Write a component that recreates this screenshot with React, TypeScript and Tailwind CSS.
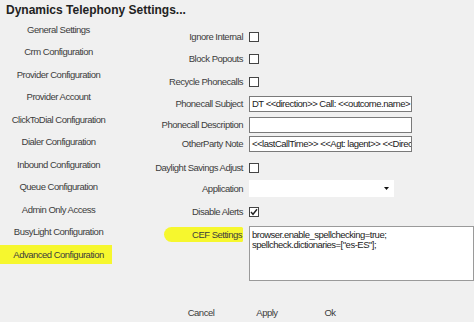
import React from "react";

const navItems = [
  "General Settings",
  "Crm Configuration",
  "Provider Configuration",
  "Provider Account",
  "ClickToDial Configuration",
  "Dialer Configuration",
  "Inbound Configuration",
  "Queue Configuration",
  "Admin Only Access",
  "BusyLight Configuration",
];

const font = { fontFamily: '"Liberation Sans", Arial, sans-serif' };

function Box({ checked = false }: { checked?: boolean }) {
  return (
    <div className="w-[10px] h-[10px] border border-[#444] bg-white flex items-center justify-center">
      {checked && (
        <svg width="8" height="8" viewBox="0 0 8 8">
          <path d="M1 4 L3 6.3 L7 1.2" stroke="#222" strokeWidth="1.4" fill="none" />
        </svg>
      )}
    </div>
  );
}

function Row({ label, h, mt, children }: { label: string; h: number; mt: number; children: React.ReactNode }) {
  return (
    <div className="flex items-center" style={{ height: h, marginTop: mt }}>
      <div className="w-[126px] text-right text-[#3c3c3c] whitespace-nowrap">{label}</div>
      <div className="ml-[6px] flex items-center">{children}</div>
    </div>
  );
}

export default function App() {
  return (
    <div
      className="w-[474px] h-[322px] bg-[#f0f0f0] overflow-hidden text-[9.5px] tracking-[-0.5px] leading-none"
      style={font}
    >
      <div className="h-[18px] pl-[6px] pt-[4px] text-[12px] tracking-normal font-bold text-[#222] whitespace-nowrap">
        Dynamics Telephony Settings...
      </div>
      <div className="flex">
        <div className="w-[117px] shrink-0 flex flex-col">
          {navItems.map((n) => (
            <div key={n} className="h-[22.5px] flex items-center justify-center text-[#3c3c3c] whitespace-nowrap">
              {n}
            </div>
          ))}
          <div className="h-[22.5px] flex items-center">
            <div className="w-[112px] h-[19px] bg-[#f6f72e] flex items-center justify-center pl-[5px] text-[#3c3c3c] whitespace-nowrap">
              Advanced Configuration
            </div>
          </div>
        </div>
        <div className="flex flex-col">
          <Row label="Ignore Internal" h={23} mt={7}>
            <Box />
          </Row>
          <Row label="Block Popouts" h={22} mt={0}>
            <Box />
          </Row>
          <Row label="Recycle Phonecalls" h={23} mt={0}>
            <Box />
          </Row>
          <Row label="Phonecall Subject" h={16} mt={3}>
            <div className="w-[163px] h-[16px] border border-[#7a7a7a] bg-white px-[2px] flex items-center overflow-hidden whitespace-nowrap text-[#222]">
              DT &lt;&lt;direction&gt;&gt; Call: &lt;&lt;outcome.name&gt;
            </div>
          </Row>
          <Row label="Phonecall Description" h={16} mt={5}>
            <div className="w-[163px] h-[16px] border border-[#7a7a7a] bg-white" />
          </Row>
          <Row label="OtherParty Note" h={16} mt={3}>
            <div className="w-[163px] h-[16px] border border-[#7a7a7a] bg-white px-[2px] flex items-center overflow-hidden whitespace-nowrap text-[#222]">
              &lt;&lt;lastCallTime&gt;&gt; &lt;&lt;Agt: lagent&gt;&gt; &lt;&lt;Direc
            </div>
          </Row>
          <Row label="Daylight Savings Adjust" h={10} mt={11}>
            <Box />
          </Row>
          <Row label="Application" h={17} mt={7}>
            <div className="w-[145px] h-[17px] bg-white flex items-center justify-end pr-[5px]">
              <svg width="5" height="3" viewBox="0 0 5 3">
                <path d="M0 0 L5 0 L2.5 3 Z" fill="#111" />
              </svg>
            </div>
          </Row>
          <Row label="Disable Alerts" h={10} mt={10}>
            <Box checked />
          </Row>
          <div className="flex items-start h-[55px] mt-[9px]">
            <div className="w-[126px] flex justify-end">
              <div className="mt-[1px] w-[79px] h-[15px] bg-[#f6f72e] rounded-l-[10px] rounded-r-[2px] flex items-center justify-end pr-[1px] text-[#3c3c3c] whitespace-nowrap">
                CEF Settings
              </div>
            </div>
            <div className="ml-[6px] w-[225px] h-[55px] border border-[#9a9a9a] bg-white px-[2px] pt-[3px] text-[#222] leading-[10px] whitespace-nowrap overflow-hidden">
              <div>browser.enable_spellchecking=true;</div>
              <div>spellcheck.dictionaries=["es-ES"];</div>
            </div>
          </div>
          <div className="flex h-[16px] mt-[24px] items-center text-[#3c3c3c]">
            <div className="ml-[54px] w-[60px] text-center">Cancel</div>
            <div className="ml-[6px] w-[60px] text-center">Apply</div>
            <div className="ml-[3px] w-[60px] text-center">Ok</div>
          </div>
        </div>
      </div>
    </div>
  );
}
